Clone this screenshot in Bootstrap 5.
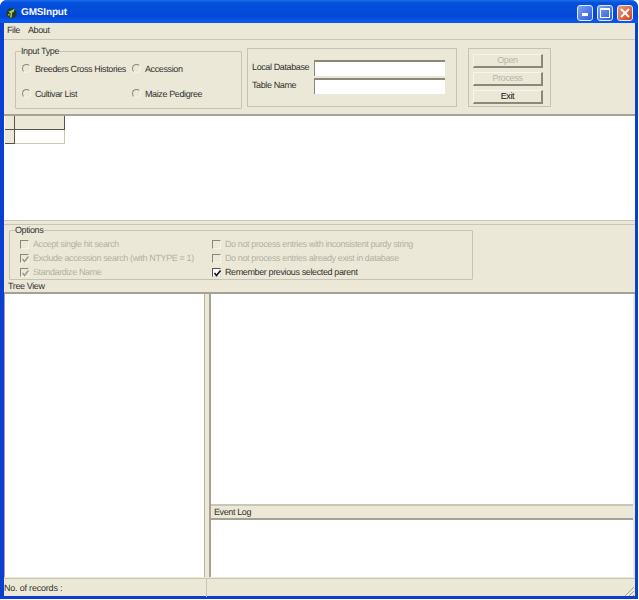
<!DOCTYPE html>
<html lang="en">

<head>
    <meta charset="UTF-8">
    <meta name="viewport" content="width=device-width, initial-scale=1.0">
    <title>GMSInput</title>
    <link href="https://cdn.jsdelivr.net/npm/bootstrap@5.3.0/dist/css/bootstrap.min.css" rel="stylesheet">
    <script src="https://cdn.jsdelivr.net/npm/bootstrap@5.3.0/dist/js/bootstrap.bundle.min.js"></script>
    <style>
        body { background: #fff; font-family: "Liberation Sans", Arial, sans-serif; font-size: 9px; letter-spacing: -0.38px; line-height: 12px; color: #33332e; overflow: hidden; text-rendering: geometricPrecision; }
        .xp-window { width: 638px; height: 599px; background: #ebe8d8; border: solid #0a3fd0; border-width: 0 3px 3px 4px; border-radius: 7px 7px 0 0; }
        .xp-title { height: 23px; flex: none; margin: 0 -3px 0 -4px; padding: 3px 5px 0 6px; background: linear-gradient(#1a6fe8 0, #0550de 12%, #0348d6 70%, #0a5af0 100%); border-radius: 7px 7px 0 0; color: #f2f6ff; font-size: 10px; font-weight: 700; letter-spacing: -0.15px; }
        .xp-btn { width: 16px; height: 16px; border: 1px solid #e4ebfb; border-radius: 3px; background: linear-gradient(135deg, #7fa4f0, #2a5ad8); }
        .xp-btn.xp-close { background: linear-gradient(135deg, #ec9a78, #d0401c); }
        .xp-menu { height: 17px; flex: none; padding: 0 0 2px 3px; gap: 8px; border-bottom: 1px solid #c9c6b4; }
        .xp-top { height: 76px; flex: none; padding: 8px 0 0 11px; border-bottom: 2px solid #a5a294; }
        fieldset.xp-group { border: 1px solid #c6c3b2; padding: 0; margin: 0; border-radius: 1px; }
        fieldset.xp-group legend { float: none; width: auto; margin: 0 0 0 5px; padding: 0; font-size: 9px; line-height: 10px; }
        .xp-input-type { width: 227px; height: 63px; margin-top: -2px !important; }
        .xp-radios { display: grid; grid-template-columns: 110px 1fr; grid-auto-rows: 25px; padding: 0 0 0 6px; }
        .xp-check { display: flex; align-items: center; gap: 4px; white-space: nowrap; }
        .xp-radio { width: 9px; height: 9px; flex: none; border-radius: 50%; border: 1px solid; border-color: #8b8877 #f5f4ec #f5f4ec #8b8877; background: #ebe8d8; }
        .xp-db { width: 210px; height: 59px; margin-left: 5px; border: 1px solid #c6c3b2; padding: 10px 0 0 4px; }
        .xp-dbrow { height: 18px; display: flex; align-items: center; }
        .xp-dbrow span { width: 62px; margin-bottom: 3px; white-space: nowrap; }
        .xp-dbinput { width: 131px; height: 16px; background: #fff; border: 0; border-top: 2px solid #8b8877; border-left: 1px solid #8b8877; padding: 0; }
        .xp-actions { width: 83px; height: 59px; margin-left: 11px; border: 1px solid #c6c3b2; padding: 5px 0 0 4px; }
        .xp-action { display: block; width: 70px; height: 14px; padding: 0; margin-bottom: 4px; font-size: 9px; letter-spacing: -0.38px; line-height: 11px; text-align: center; background: #ebe8d8; color: #111; border: 1px solid; border-color: #f7f6ee #8b8877 #8b8877 #f7f6ee; border-width: 1px 2px 2px 1px; border-radius: 0; }
        .xp-action:disabled { color: #b8b5a6; background: #ebe8d8; border-color: #f7f6ee #8b8877 #8b8877 #f7f6ee; }
        .xp-grid { height: 105px; flex: none; background: #fff; padding: 0 0 0 1px; border-bottom: 1px solid #c9c6b4; }
        .xp-table { border-collapse: separate; border-spacing: 0; }
        .xp-table td { padding: 0; height: 14px; }
        .xp-table .xp-fixed { background: #ebe8d8; border-right: 1px solid #55534a; border-bottom: 1px solid #55534a; }
        .xp-table .xp-cell { background: #fff; border-right: 1px solid #c9c6b4; border-bottom: 1px solid #c9c6b4; }
        .xp-opts { height: 56px; flex: none; padding: 0 0 0 5px; border-top: 1px solid #c9c6b4; margin-top: 3px; }
        .xp-opts fieldset.xp-group { width: 464px; height: 55px; }
        .xp-optgrid { display: grid; grid-template-columns: 192px 1fr; grid-auto-rows: 14px; padding: 2px 0 0 10px; }
        .xp-box { position: relative; width: 9px; height: 9px; flex: none; border: 1px solid; border-color: #8b8877 #f5f4ec #f5f4ec #8b8877; display: block; }
        .xp-box svg { display: block; position: absolute; left: 0; top: 0; }
        .xp-box.xp-on { background: #fff; border-color: #55534a #ddd #ddd #55534a; }
        .xp-off { color: #b4b1a2; }
        .xp-treelabel { height: 12px; flex: none; padding: 0 0 0 4px; }
        .xp-split { height: 285px; flex: none; border-top: 2px solid #a5a294; }
        .xp-tree { width: 201px; background: #fff; border-left: 1px solid #a5a294; border-right: 1px solid #b5b2a2; }
        .xp-gap { width: 6px; border-right: 2px solid #a5a294; }
        .xp-right { width: 422px; }
        .xp-pane { height: 211px; background: #fff; border-bottom: 1px solid #c9c6b4; }
        .xp-loghead { height: 15px; border-bottom: 2px solid #a5a294; padding-left: 3px; line-height: 13px; border-top: 1px solid #c9c6b4; }
        .xp-log { height: 57px; background: #fff; }
        .xp-status { flex: 1 1 auto; border-top: 1px solid #c9c6b4; margin-top: 1px; position: relative; letter-spacing: -0.2px; }
        .xp-status > div:first-child { width: 203px; border-right: 1px solid #c9c6b4; line-height: 18px; }
        .xp-grip { position: absolute; right: 0; bottom: 0; }
    </style>
</head>

<body>

    <div class="xp-window d-flex flex-column">
        <div class="xp-title d-flex align-items-center">
            <svg class="me-1" width="11" height="12" viewBox="0 0 14 15">
                <circle cx="7" cy="8" r="6.5" fill="#1d3a2a" />
                <path d="M3 6 L11 2 L10 6 L8 7 L7 14 L5 13 L6 8 Z" fill="#9fd05a" />
                <path d="M2 9 L5 8 L4 12 Z" fill="#d89a3a" />
            </svg>
            <span class="flex-grow-1">GMSInput</span>
            <div class="d-flex gap-1">
                <div class="xp-btn d-flex align-items-end ps-1 pb-1">
                    <svg width="6" height="3"><rect width="6" height="3" fill="#fff" /></svg>
                </div>
                <div class="xp-btn d-flex align-items-center justify-content-center">
                    <svg width="10" height="10"><rect x=".5" y=".5" width="9" height="9" fill="none" stroke="#fff" /><rect width="10" height="2" fill="#fff" /></svg>
                </div>
                <div class="xp-btn xp-close d-flex align-items-center justify-content-center">
                    <svg width="10" height="10"><path d="M1 1 L9 9 M9 1 L1 9" stroke="#fff" stroke-width="2" /></svg>
                </div>
            </div>
        </div>

        <div class="xp-menu d-flex align-items-center">
            <span>File</span>
            <span>About</span>
        </div>

        <div class="xp-top d-flex align-items-start">
            <fieldset class="xp-group xp-input-type">
                <legend>Input Type</legend>
                <div class="xp-radios">
                    <label class="xp-check"><span class="xp-radio"></span>Breeders Cross Histories</label>
                    <label class="xp-check"><span class="xp-radio"></span>Accession</label>
                    <label class="xp-check"><span class="xp-radio"></span>Cultivar List</label>
                    <label class="xp-check"><span class="xp-radio"></span>Maize Pedigree</label>
                </div>
            </fieldset>
            <div class="xp-db">
                <div class="xp-dbrow"><span>Local Database</span><div class="xp-dbinput"></div></div>
                <div class="xp-dbrow"><span>Table Name</span><div class="xp-dbinput"></div></div>
            </div>
            <div class="xp-actions">
                <button class="xp-action" disabled>Open</button>
                <button class="xp-action" disabled>Process</button>
                <button class="xp-action">Exit</button>
            </div>
        </div>

        <div class="xp-grid">
            <table class="xp-table">
                <tr><td class="xp-fixed" style="width: 10px"></td><td class="xp-fixed" style="width: 50px"></td></tr>
                <tr><td class="xp-fixed"></td><td class="xp-cell"></td></tr>
            </table>
        </div>

        <div class="xp-opts">
            <fieldset class="xp-group">
                <legend>Options</legend>
                <div class="xp-optgrid">
                    <label class="xp-check xp-off"><span class="xp-box"></span>Accept single hit search</label>
                    <label class="xp-check xp-off"><span class="xp-box"></span>Do not process entries with inconsistent purdy string</label>
                    <label class="xp-check xp-off"><span class="xp-box"><svg width="9" height="9"><path d="M1.5 4 L3.5 6.5 L7.5 1.5" fill="none" stroke="#a09d8e" stroke-width="1.6" /></svg></span>Exclude accession search (with NTYPE = 1)</label>
                    <label class="xp-check xp-off"><span class="xp-box"></span>Do not process entries already exist in database</label>
                    <label class="xp-check xp-off"><span class="xp-box"><svg width="9" height="9"><path d="M1.5 4 L3.5 6.5 L7.5 1.5" fill="none" stroke="#a09d8e" stroke-width="1.6" /></svg></span>Standardize Name</label>
                    <label class="xp-check"><span class="xp-box xp-on"><svg width="9" height="9"><path d="M1.5 4 L3.5 6.5 L7.5 1.5" fill="none" stroke="#111" stroke-width="1.6" /></svg></span>Remember previous selected parent</label>
                </div>
            </fieldset>
        </div>

        <div class="xp-treelabel">Tree View</div>

        <div class="xp-split d-flex">
            <div class="xp-tree"></div>
            <div class="xp-gap"></div>
            <div class="xp-right">
                <div class="xp-pane"></div>
                <div class="xp-loghead">Event Log</div>
                <div class="xp-log"></div>
            </div>
        </div>

        <div class="xp-status d-flex">
            <div>No. of records :</div>
            <svg class="xp-grip" width="12" height="12">
                <path d="M11 2 L2 11 M11 6 L6 11 M11 10 L10 11" stroke="#a5a294" />
            </svg>
        </div>
    </div>

</body>

</html>
